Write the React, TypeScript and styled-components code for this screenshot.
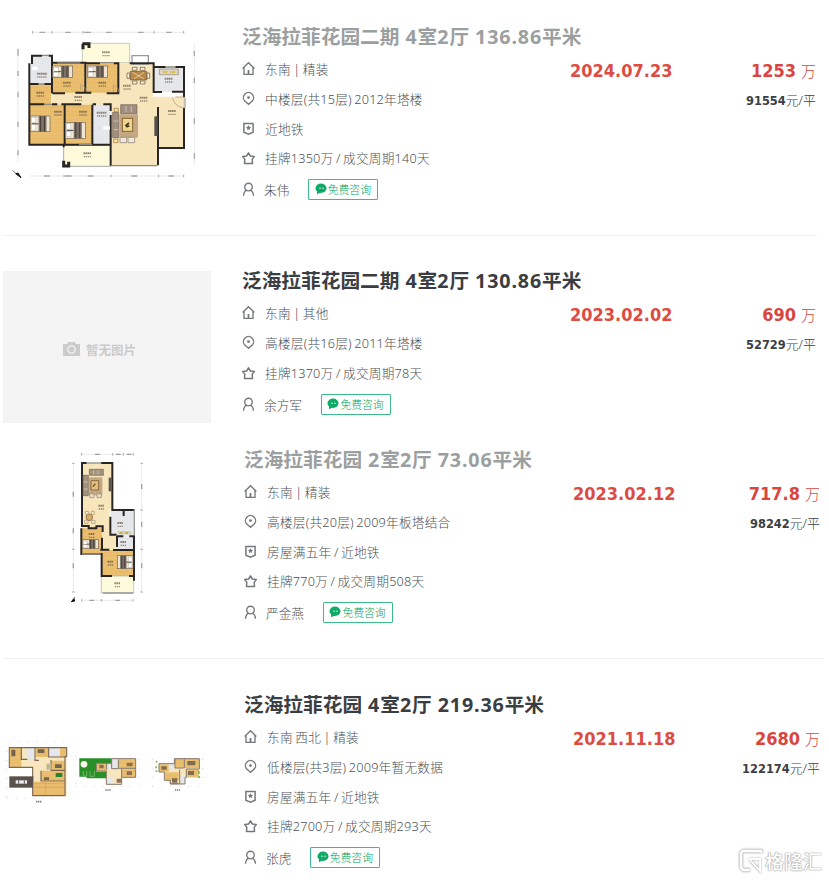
import React from 'react';
import styled, { createGlobalStyle } from 'styled-components';

const GlobalStyle = createGlobalStyle`
  body { margin: 0; background: #fff; }
  * { box-sizing: border-box; }
`;

const Page = styled.main`
  position: relative;
  width: 829px;
  height: 880px;
  overflow: hidden;
  background: #fff;
  font-family: 'Noto Sans', 'Noto Sans CJK SC', sans-serif;
  color: #4c5054;
`;

const Listing = styled.article<{ $height: number; $top: number; $inset: number }>`
  display: grid;
  grid-template-columns: ${p => 242 + p.$inset}px ${p => (p.$inset ? 329 : 328)}px 1fr;
  height: ${p => p.$height}px;
  padding-top: ${p => p.$top}px;
  padding-right: ${p => p.$inset ? 9 : 13}px;
`;

const Divider = styled.hr<{ $end: number }>`
  height: 1px;
  border: 0;
  margin: 0 ${p => p.$end}px 0 3px;
  background: #f0f0f0;
`;

const Media = styled.div<{ $shift: number }>`
  margin-top: ${p => p.$shift}px;
  svg { display: block; }
`;

const EmptyPhoto = styled.div`
  display: flex;
  align-items: center;
  justify-content: center;
  gap: 6px;
  width: 208px;
  height: 152px;
  margin-left: 3px;
  padding: 4px 15px 0 0;
  background: #f4f4f4;
  color: #cbcbcb;
  font-size: 12.5px;
  font-weight: 700;
  white-space: nowrap;
`;

const Details = styled.div`
  min-width: 0;
`;

const Title = styled.h2<{ $visited: boolean }>`
  height: 34px;
  margin: 0;
  font-size: 19.7px;
  line-height: 34px;
  font-weight: 700;
  white-space: nowrap;
  color: ${p => (p.$visited ? '#9b9f9f' : '#3a3e42')};
`;

const Digits = styled.span`
  letter-spacing: 0.85px;
`;

const InfoRow = styled.div<{ $height: number }>`
  display: flex;
  align-items: center;
  gap: 10px;
  height: ${p => p.$height}px;
  font-size: 12.7px;
  font-weight: 300;
  white-space: nowrap;
  svg { flex: none; }
`;

const InfoText = styled.span`
  margin-bottom: 2px;
  letter-spacing: 0.2px;
  word-spacing: -1px;
`;

const AgentName = styled.span`
  margin: 1px 19px 0 -1px;
`;

const Consult = styled.button`
  display: flex;
  align-items: center;
  justify-content: center;
  gap: 1px;
  width: 70px;
  height: 21px;
  margin-left: -10px;
  padding: 0 1px 0 0;
  border: 1px solid #3cbd88;
  border-radius: 1px;
  background: #fff;
  color: #00a35c;
  font: 300 10.8px/18px 'Noto Sans CJK SC', sans-serif;
  white-space: nowrap;
`;

const Deal = styled.div`
  display: grid;
  grid-template-columns: 1fr auto;
  grid-template-rows: 34px 24px;
  align-content: start;
  align-items: center;
  padding-top: 34px;
  white-space: nowrap;
`;

const DealDate = styled.time`
  font: 700 18px/24px 'DejaVu Sans Condensed', 'DejaVu Sans', sans-serif;
  font-stretch: condensed;
  color: #dc4c43;
`;

const Price = styled.div`
  font: 300 15px/24px 'Noto Sans CJK SC', sans-serif;
  color: #d9453f;
  text-align: right;
  b {
    font: 700 18px/24px 'DejaVu Sans Condensed', 'DejaVu Sans', sans-serif;
    font-stretch: condensed;
    margin-right: 5px;
  }
`;

const UnitPrice = styled.div`
  grid-column: 1 / 3;
  font: 300 12.9px/20px 'Noto Sans', 'Noto Sans CJK SC', sans-serif;
  color: #3c4043;
  text-align: right;
  b {
    font: 700 12.7px/20px 'DejaVu Sans Condensed', 'DejaVu Sans', sans-serif;
    font-stretch: condensed;
  }
`;

const Watermark = styled.div`
  position: absolute;
  right: 7px;
  bottom: 5px;
  display: flex;
  align-items: center;
  gap: 2px;
  height: 28px;
  font: 500 19px/28px 'Noto Sans CJK SC', sans-serif;
  color: #fff;
  text-shadow: 0 0 1px #999, 0 0 1px #aaa, 0 0 2px #bbb;
  svg { filter: drop-shadow(0 0 0.6px #888) drop-shadow(0 0 0.8px #aaa); }
`;

type IconKind = 'home' | 'pin' | 'badge' | 'star' | 'agent';

const Icon = ({ kind }: { kind: IconKind }) => (
  <svg width="13" height="16" viewBox="0 0 13 16" fill="none" stroke="#74787b" strokeWidth="1.35">
    {kind === 'home' && <><path d="M.6 7.4 6.5 1.8l5.9 5.6M2 6.3v7h9v-7" /><path d="M6.5 9v4" strokeWidth="1.8" /></>}
    {kind === 'pin' && <><path d="M6.5 13.3 2.5 9.8a5.1 5.1 0 1 1 8 0Z" /><circle cx="6.5" cy="6.6" r="1.4" fill="#74787b" stroke="none" /></>}
    {kind === 'badge' && <><path d="M1.9 2.5h9.2v8.7l-4.6 2-4.6-2Z" strokeWidth="1.5" /><path d="m6.5 4.2.8 1.5 1.8.3-1.3 1.2.3 1.8-1.6-.8-1.6.8.3-1.8L3.9 6l1.8-.3Z" fill="#74787b" stroke="none" /></>}
    {kind === 'star' && <path d="m6.5 2.8 1.9 3.2 3.9.6-2.1 2.6.3 4.3h-8l.3-4.3L.7 6.6 4.6 6Z" strokeWidth="1.5" strokeLinejoin="round" />}
    {kind === 'agent' && <><circle cx="6.5" cy="6" r="3.8" /><path d="M4.7 9.2c-1.9.7-3 2.8-3.2 5.6m6.8-5.6c1.9.7 3 2.8 3.2 5.6" /></>}
  </svg>
);

const ChatIcon = () => (
  <svg width="12" height="12" viewBox="0 0 12 12">
    <ellipse cx="6" cy="5.3" rx="5.5" ry="4.7" fill="#0dab66" />
    <path d="M2 8v3.2L5.5 9.5Z" fill="#0dab66" />
    <circle cx="5" cy="5.2" r=".7" fill="#fff" /><circle cx="8" cy="5.2" r=".7" fill="#fff" />
  </svg>
);

const CameraIcon = () => (
  <svg width="17" height="14" viewBox="0 0 17 14">
    <path d="M0 2h4l1.5-2h6L13 2h4v12H0Z" fill="#cbcbcb" />
    <circle cx="8.5" cy="7.5" r="3.7" fill="none" stroke="#f4f4f4" strokeWidth="1.3" />
  </svg>
);

const WOOD = '#ebbf70';
const CREAM = '#f8e7be';
const TILE = '#e6e7ea';
const BALCONY = '#fdfbdc';
const WALL = '#282523';

/* Room caption: name line above its area line. */
const Caption = ({ x, y, w = 24 }: { x: number; y: number; w?: number }) => (
  <g stroke="#55483a" opacity=".6">
    <path d={`M${x - w / 2} ${y - 4}h${w}`} strokeWidth="6" strokeDasharray="5 1" />
    <path d={`M${x - w / 2 + 1} ${y + 6}h${w - 2}`} strokeWidth="4" strokeDasharray="4 2" />
  </g>
);

const Bed = ({ x, y, w, h, flip = false }: { x: number; y: number; w: number; h: number; flip?: boolean }) => (
  <g transform={flip ? `translate(${2 * x + w} 0) scale(-1 1)` : undefined}>
    <rect x={x} y={y} width={w} height={h} fill="#eee5d5" stroke="#776350" strokeWidth="2" />
    <rect x={x + w * 0.42} y={y} width={w * 0.4} height={h} fill="#7b7066" />
    <path d={`M${x + w * 0.52} ${y}v${h}M${x + w * 0.72} ${y}v${h}M${x + 4} ${y + h / 2}h${w * 0.34}`} stroke="#453e38" strokeWidth="3" />
    <rect x={x + 3} y={y + 4} width={w * 0.23} height={h * 0.34} fill="#fff" stroke="#a1917c" />
    <rect x={x + 3} y={y + h * 0.56} width={w * 0.23} height={h * 0.34} fill="#fff" stroke="#a1917c" />
  </g>
);

const FloorTexture = () => (
  <defs>
    <pattern id="planks" width="16" height="24" patternUnits="userSpaceOnUse">
      <rect width="16" height="24" fill={WOOD} />
      <path d="M0 0h16M0 12h16M8 0v12" stroke="#d89f49" strokeWidth="1" opacity=".6" />
    </pattern>
    <pattern id="tiles" width="12" height="12" patternUnits="userSpaceOnUse">
      <rect width="12" height="12" fill={CREAM} />
      <path d="M0 0h12M0 0v12" stroke="#efd9a8" strokeWidth="1" />
    </pattern>
  </defs>
);

const LargePlan = () => (
  <svg width="220" height="175" viewBox="0 0 660 525">
    <FloorTexture />
    <g fill="none" strokeWidth="2">
      <path d="M98 52h455M90 483h463M54 100v340M583 88v361" stroke="#dedede" />
      <path d="M118 52h17M195 52h17M253 52h20M318 52h17M414 52h17M498 52h17M132 483h17M195 483h20M263 483h17M394 483h18M505 483h17" stroke="#a8a8a8" strokeWidth="4" />
      <path d="M54 102v20M54 168v15M54 232v15M54 320v15M54 406v15M583 108v16M583 188v16M583 310v16M583 415v16" stroke="#a8a8a8" strokeWidth="4" />
      <path d="M98 48v8M156 48v8M249 48v8M462 48v8M551 48v8M192 479v8M333 479v8M476 479v8M551 479v8" stroke="#888" />
    </g>
    <path d="M247 85h142v58H247Z" fill={BALCONY} stroke="#b0b0a5" strokeWidth="2" />
    <path d="M191 390h143v64H191Z" fill={BALCONY} stroke="#aaa" strokeWidth="3" />
    <path d="M157 145h302v100h93v154h-79v53H333V270H157Z" fill="url(#tiles)" />
    <path d="M396 122h49v25h-49Z" fill="#fff" stroke="#9999a0" strokeWidth="4" />
    <path d="M157 145h99v88h-99ZM260 145h96v88h-96ZM88 207h66v62H88ZM88 269h104v120H88ZM195 269h82v120h-82Z" fill="url(#planks)" />
    <path d="M92 122h63v83H92ZM279 269h53v120h-53ZM463 155h88v76h-88Z" fill={TILE} />
    <g fill="none" stroke={WALL} strokeWidth="6">
      <path d="M96 147v-25h30M146 122h10v113M88 145v244h103v8M88 207h28M133 207h22M88 268h45M156 143h100v90h-30M258 145h42M341 145h14v90h-35M157 235h38M257 233h17" />
      <path d="M156 268h16M184 268h60M194 269v120h138v63M277 269v120M278 268h10M310 268h22v20M332 300v89" />
      <path d="M389 145h72v86h25M461 156h36M526 156h26v74h-36M552 158v89M552 279v120h-78M474 276v175" />
    </g>
    <path d="M247 86h20v13M249 87v16M191 437v16h15v-13" fill="none" stroke={WALL} strokeWidth="9" />
    <path d="M126 121h21M172 144h69M299 143h42M496 156h30M116 207h17M134 268h22M237 389h39M336 452h136" stroke="#8c8981" strokeWidth="4" />
    <path d="M526 246h27v33q-32-5-35-31m38 0v32M242 225V208q15 4 17 23M340 230v-20q15 3 17 22" fill="none" stroke="#a69474" strokeWidth="2" />
    <Bed x={158} y={153} w={60} h={34} />
    <Bed x={262} y={153} w={61} h={34} />
    <Bed x={91} y={303} w={59} h={47} />
    <Bed x={196} y={322} w={60} h={48} />
    <g fill="#ba8a45" stroke="#665138" strokeWidth="2">
      <path d="M391 169h49v26h-49Z" />
      <g fill="#f7eedb"><path d="M397 157h14v9h-14ZM421 157h14v9h-14ZM397 198h14v9h-14ZM421 198h14v9h-14ZM381 174h8v16h-8ZM441 174h8v16h-8Z" /></g>
      <path d="m397 172 35 20m0-20-30 20" stroke="#f2e5c8" />
    </g>
    <rect x="358" y="298" width="56" height="70" fill="#c4a883" />
    <rect x="367" y="310" width="31" height="39" fill="#edd68d" stroke="#896334" strokeWidth="3" />
    <path d="m376 333 11-9m-8 12 9-4" stroke="#473523" strokeWidth="5" />
    <g fill="#a18f7f" stroke="#706256" strokeWidth="2"><path d="M362 269h49v27h-49ZM338 292h18v76h-18Z" /><path d="M378 273v18M394 273v18M340 318h15M340 344h15" stroke="#ddd" /></g>
    <g fill="#eee7dd" stroke="#877768" strokeWidth="2"><path d="M360 367h20v16h-20ZM384 367h20v16h-20Z" /></g>
    <path d="M341 372h13v11h-13ZM342 280h13v10h-13Z" fill="#ffe08c" stroke="#92734c" strokeWidth="2" />
    <path d="M463 304h10v59h-10Z" fill="#57504b" />
    <path d="M478 162h57v17h-57Z" fill="#ddd5bd" stroke="#91866f" strokeWidth="2" />
    <path d="M489 171h13m10 0h13" stroke="#e0bd4c" strokeWidth="6" />
    <path d="M97 155h16v10H97ZM310 334h20v10h-20Z" fill="#fff" />
    {[[126, 180, 31], [201, 207], [307, 207], [121, 237], [235, 250], [174, 294], [249, 294], [305, 297, 30], [381, 216], [431, 252], [506, 195], [516, 292], [318, 116], [262, 419]].map(([x, y, w]) => <Caption key={`${x}-${y}`} x={x} y={y} w={w} />)}
    <path d="m38 466 9 9" stroke="#777" strokeWidth="3" /><path d="m47 476 16 12-9-14Z" fill="#111" stroke="#111" strokeWidth="3" />
  </svg>
);

const NarrowPlan = () => (
  <svg width="100" height="170" viewBox="0 0 300 510">
    <FloorTexture />
    <g fill="none" strokeWidth="2"><path d="M65 43h156M65 481h154M40 70v387M245 70v387" stroke="#dedede" /><path d="M105 43h15M168 43h14M200 43h14M88 481h14M166 481h14M40 155v15M40 265v15M40 370v15M245 132v15M245 245v15M245 370v15" stroke="#a0a0a0" strokeWidth="4" /><path d="M65 39v8M158 39v8M190 39v8M220 39v8M65 477v8M124 477v8M219 477v8M36 70h8M36 328h8M36 456h8M241 70h8M241 210h8M241 328h8M241 456h8" stroke="#888" /></g>
    <path d="M66 69h92v140h-10v75h24v44h-46v-62H66Z" fill="url(#tiles)" />
    <path d="M65 265h61v77H65ZM124 330h97v78h-97Z" fill="url(#planks)" />
    <path d="M152 211h71v76h-71ZM172 289h50v38h-50Z" fill={TILE} />
    <path d="M124 408h97v51h-97Z" fill={BALCONY} stroke="#aaa" strokeWidth="2" />
    <path d="M63 69h17M123 69h34v141h34v18M66 69v189h20v7h23v-6h19v17M64 265v77h61v66h31M126 293v36h22M126 329h-5M151 230v54h19M171 288v33M171 289h19M208 289h14v133M159 330h62M207 408h15M156 210h67" fill="none" stroke={WALL} strokeWidth="6" />
    <path d="M80 69h44M223 210v76M66 342h56M128 459h92" stroke="#999" strokeWidth="4" />
    <path d="M87 112h40v54H87Z" fill="#c4a883" /><path d="M93 122h23v28H93Z" fill="#e2c17a" stroke="#8d693e" strokeWidth="3" />
    <path d="M88 88h42v18H88ZM69 106h16v61H69Z" fill="#a2937d" stroke="#716255" strokeWidth="2" />
    <path d="M101 91v12M114 91v12M71 126h12M71 147h12" stroke="#e2dcd0" strokeWidth="2" />
    <path d="M89 161h13v12H89ZM111 161h13v12h-13Z" fill="#e4dcca" stroke="#93836b" strokeWidth="2" /><path d="m99 140 7-9" stroke="#5c4930" strokeWidth="4" />
    <circle cx="88" cy="232" r="10" fill="#d6ad65" stroke="#735336" strokeWidth="2" /><path d="M76 214h9v9h-9ZM94 214h9v9h-9ZM74 241h10v9H74ZM95 241h10v9H95Z" fill="#f9f1dc" stroke="#a4875b" strokeWidth="2" />
    <path d="M146 113h8v41h-8Z" fill="#59534e" />
    <Bed x={67} y={299} w={48} h={27} /><Bed x={172} y={347} w={47} h={39} flip />
    <path d="M173 273h41v10h-41Z" fill="#d6d0b0" /><path d="M179 279h8m9 0h8" stroke="#ccae46" strokeWidth="6" />
    {[[124, 201], [181, 253], [95, 286], [190, 310], [151, 369], [172, 434]].map(([x, y]) => <Caption key={x} x={x} y={y} w={18} />)}
    <path d="m38 481 7-10" stroke="#777" strokeWidth="3" /><path d="m34 485 8-9 2 7Z" fill="#111" stroke="#111" strokeWidth="3" />
  </svg>
);

const TriplePlan = () => (
  <svg width="220" height="75" viewBox="0 0 660 225">
    <FloorTexture />
    <path d="M29 38h171v143H99V97H29Z" fill={CREAM} />
    <path d="M30 39h34v57H30ZM108 39h37v27h-37ZM153 77h42v29h-42ZM123 107h72v31h-72ZM99 140h97v41H99ZM180 39h19v26h-19Z" fill="url(#planks)" />
    <path d="M80 39h24v34H80ZM149 39h31v27h-31Z" fill={TILE} />
    <path d="M28 38h172v27h-5v117H98V97H28ZM64 39v34h18M105 39v37h12M146 39v27h49M153 75v31h42M123 107v31h74M99 123v17" fill="none" stroke="#7d6752" strokeWidth="3.4" />
    <path d="M28 124h71v34H28Z" fill="#5b514c" /><path d="M47 136h34v10H47Z" fill="#eee" /><path d="M56 136v10M73 136v10" stroke="#555" strokeWidth="3" />
    <path d="M34 44h12v20H34ZM113 43h20v11h-20ZM165 88h20v11h-20ZM132 127h15v8h-15Z" fill="#736151" />
    <path d="M167 114h20v12h-20Z" fill="#29822e" /><path d="M139 86h15v18h-15Z" fill="#c9c19b" /><path d="M143 87v16M148 87v16M100 145h92M100 157h92M137 141v38" stroke="#ba8d4c" />
    <path d="M238 70h96v60h-74v-5h-22Z" fill="#289027" />
    <circle cx="252" cy="88" r="10" fill="#f5f5e8" /><path d="M250 108v15h10v-15M270 108v16h13v-15" fill="none" stroke="#71b367" strokeWidth="3" />
    <path d="M289 84h45v-13h73v55h-42v22h-46v-38h-30Z" fill={CREAM} />
    <path d="M289 85h30v25h-30ZM355 73h51v26h-51ZM365 103h42v24h-42Z" fill="url(#planks)" />
    <path d="M336 72h18v26h-18ZM320 84h14v17h-14ZM321 128h17v19h-17Z" fill={TILE} />
    <path d="M289 85h45V71h73v56h-42v21h-46v-40h-30ZM355 73v27h51M365 101v25M335 73v28h19M320 85v20" fill="none" stroke="#85766a" strokeWidth="3" />
    <path d="M298 89h13v11h-13ZM380 83h18v11h-18ZM380 109h16v11h-16ZM350 131h14v12h-14Z" fill="#8f6f50" />
    <path d="M477 86h46V71h75v57h-43v19h-44v-11h-18v-25h-16Z" fill={CREAM} />
    <path d="M525 72h27v26h-27ZM553 72h44v27h-44ZM559 103h38v24h-38ZM478 88h28v22h-28ZM495 112h41v24h-41Z" fill="url(#planks)" />
    <path d="M508 87h14v17h-14ZM541 121h14v25h-14Z" fill={TILE} />
    <path d="M477 86h46V71h75v31h-39v25h-4v20h-44v-11h-18v-25h-16ZM525 72v27h26M553 73v27M539 104v42M511 135v11h26" fill="none" stroke="#85766a" strokeWidth="3" />
    <path d="M562 78h24v13h-24ZM564 108h18v12h-18ZM516 130h16v13h-16ZM484 94h16v10h-16Z" fill="#806c50" />
    <g stroke="#bbb" strokeWidth="2" strokeDasharray="3 24"><path d="M28 21h171M20 48v140M20 190h159M227 62v92M227 154h184M417 71v84M457 71v83M457 154h145M608 72v75" /></g>
    <path d="M467 77h5v6h-5ZM466 94h5v6h-5ZM467 106h5v5h-5ZM594 109h6v7h-6ZM594 123h6v6h-6Z" fill="#8bbb60" />
    <path d="M108 200h16M316 165h16M525 165h15" stroke="#777" strokeWidth="5" strokeDasharray="4 2" />
  </svg>
);

const NarrowPlanFrame = styled.div`
  margin-left: 60px;
`;

interface ListingData {
  title: string;
  visited: boolean;
  media: React.ReactNode;
  mediaShift: number;
  rows: { icon: IconKind; text: string; height: number }[];
  agent: string;
  agentHeight: number;
  date: string;
  price: string;
  unit: string;
  height: number;
  top: number;
  inset: number;
  divider?: number;
}

const listings: ListingData[] = [
  {
    title: '泛海拉菲花园二期 4室2厅 136.86平米', visited: true, media: <LargePlan />, mediaShift: -5,
    rows: [
      { icon: 'home', text: '东南 | 精装', height: 30 },
      { icon: 'pin', text: '中楼层(共15层) 2012年塔楼', height: 30 },
      { icon: 'badge', text: '近地铁', height: 30 },
      { icon: 'star', text: '挂牌1350万 / 成交周期140天', height: 28 },
    ],
    agent: '朱伟', agentHeight: 34, date: '2024.07.23', price: '1253', unit: '91554', height: 235, top: 20, inset: 0, divider: 12,
  },
  {
    title: '泛海拉菲花园二期 4室2厅 130.86平米', visited: false, media: <EmptyPhoto><CameraIcon />暂无图片</EmptyPhoto>, mediaShift: 7,
    rows: [
      { icon: 'home', text: '东南 | 其他', height: 30 },
      { icon: 'pin', text: '高楼层(共16层) 2011年塔楼', height: 30 },
      { icon: 'star', text: '挂牌1370万 / 成交周期78天', height: 30 },
    ],
    agent: '余方军', agentHeight: 32, date: '2023.02.02', price: '690', unit: '52729', height: 207, top: 28, inset: 0,
  },
  {
    title: '泛海拉菲花园 2室2厅 73.06平米', visited: true, media: <NarrowPlanFrame><NarrowPlan /></NarrowPlanFrame>, mediaShift: -3,
    rows: [
      { icon: 'home', text: '东南 | 精装', height: 30 },
      { icon: 'pin', text: '高楼层(共20层) 2009年板塔结合', height: 30 },
      { icon: 'badge', text: '房屋满五年 / 近地铁', height: 30 },
      { icon: 'star', text: '挂牌770万 / 成交周期508天', height: 28 },
    ],
    agent: '严金燕', agentHeight: 34, date: '2023.02.12', price: '717.8', unit: '98242', height: 215, top: 0, inset: 2, divider: 6,
  },
  {
    title: '泛海拉菲花园 4室2厅 219.36平米', visited: false, media: <TriplePlan />, mediaShift: 47,
    rows: [
      { icon: 'home', text: '东南 西北 | 精装', height: 30 },
      { icon: 'pin', text: '低楼层(共3层) 2009年暂无数据', height: 30 },
      { icon: 'badge', text: '房屋满五年 / 近地铁', height: 30 },
      { icon: 'star', text: '挂牌2700万 / 成交周期293天', height: 28 },
    ],
    agent: '张虎', agentHeight: 34, date: '2021.11.18', price: '2680', unit: '122174', height: 221, top: 29, inset: 2,
  },
];

const TitleText = ({ text }: { text: string }) => (
  <>{text.split(/([\d. ]+)/).map((part, i) => (i % 2 ? <Digits key={i}>{part}</Digits> : part))}</>
);

export default function App() {
  return (
    <>
      <GlobalStyle />
      <Page>
        {listings.map(item => (
          <React.Fragment key={item.title}>
            <Listing $height={item.height} $top={item.top} $inset={item.inset}>
              <Media $shift={item.mediaShift}>{item.media}</Media>
              <Details>
                <Title $visited={item.visited}><TitleText text={item.title} /></Title>
                {item.rows.map(row => (
                  <InfoRow key={row.icon} $height={row.height}><Icon kind={row.icon} /><InfoText>{row.text}</InfoText></InfoRow>
                ))}
                <InfoRow $height={item.agentHeight}>
                  <Icon kind="agent" />
                  <AgentName>{item.agent}</AgentName>
                  <Consult><ChatIcon />免费咨询</Consult>
                </InfoRow>
              </Details>
              <Deal>
                <DealDate>{item.date}</DealDate>
                <Price><b>{item.price}</b>万</Price>
                <UnitPrice><b>{item.unit}</b>元/平</UnitPrice>
              </Deal>
            </Listing>
            {item.divider !== undefined && <Divider $end={item.divider} />}
          </React.Fragment>
        ))}
        <Watermark>
          <svg width="25" height="26" viewBox="0 0 25 26" fill="none">
            <path d="M23 5V3H5L3 5v14l2 3h7" stroke="#fff" strokeWidth="3" />
            <path d="M12 11h10v12L12 12Z" stroke="#fff" strokeWidth="2" />
          </svg>
          格隆汇
        </Watermark>
      </Page>
    </>
  );
}
